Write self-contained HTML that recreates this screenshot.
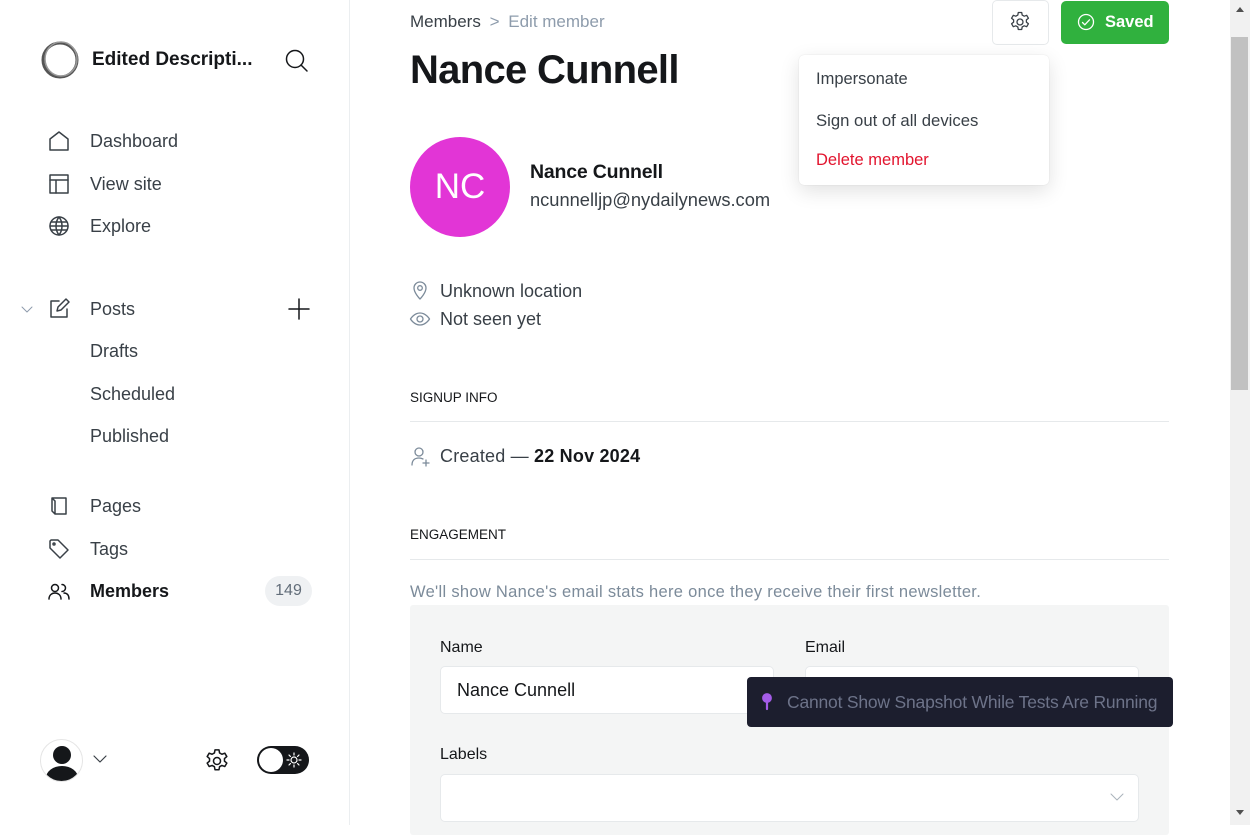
<!DOCTYPE html>
<html><head><meta charset="utf-8"><style>
*{box-sizing:border-box;margin:0;padding:0}
body{width:1250px;height:825px;overflow:hidden;background:#fff;font-family:"Liberation Sans",sans-serif;color:#15171a;position:relative}
.a{position:absolute;white-space:nowrap}
.side{position:absolute;left:0;top:0;width:350px;height:825px;border-right:1px solid #ebeef0}
.nav{font-size:18px;color:#394047}
svg{position:absolute;fill:none;stroke-linecap:round;stroke-linejoin:round}
.sb{position:absolute;left:1230px;top:0;width:20px;height:825px;background:#f1f1f1}
</style></head><body>
<div class="side">
<svg style="left:40px;top:41px" width="40" height="38" viewBox="0 0 40 38"><ellipse cx="20" cy="19" rx="17" ry="17" stroke="#555" stroke-width="3"/><ellipse cx="21" cy="18" rx="16" ry="17" stroke="#999" stroke-width="1.5"/></svg>
<div class="a" style="left:92px;top:49px;font-size:19px;font-weight:700">Edited Descripti...</div>
<svg style="left:284px;top:48px" width="26" height="26" viewBox="0 0 26 26" stroke="#15171a" stroke-width="1.5"><circle cx="11" cy="11" r="8.5"/><path d="M17 17l6 6"/></svg>

<svg style="left:48px;top:130px" width="22" height="22" viewBox="0 0 22 22" stroke="#394047" stroke-width="1.5"><path d="M2 9L11 2l9 7v11H2z"/></svg>
<div class="a nav" style="left:90px;top:131px">Dashboard</div>
<svg style="left:48px;top:173px" width="22" height="22" viewBox="0 0 22 22" stroke="#394047" stroke-width="1.5"><rect x="2" y="2" width="18" height="18"/><path d="M2 7h18M8 7v13"/></svg>
<div class="a nav" style="left:90px;top:174px">View site</div>
<svg style="left:48px;top:215px" width="22" height="22" viewBox="0 0 22 22" stroke="#394047" stroke-width="1.5"><circle cx="11" cy="11" r="9"/><path d="M2 11h18M3 7h16M3 15h16M11 2c-4 5-4 13 0 18M11 2c4 5 4 13 0 18"/></svg>
<div class="a nav" style="left:90px;top:216px">Explore</div>

<svg style="left:20px;top:302px" width="14" height="14" viewBox="0 0 14 14" stroke="#8e9cac" stroke-width="1"><path d="M2 5l5 5 5-5"/></svg>
<svg style="left:48px;top:297px" width="22" height="22" viewBox="0 0 22 22" stroke="#394047" stroke-width="1.5"><path d="M11 4H3v16h16v-8M9 14l1-4 8-8 3 3-8 8z"/></svg>
<div class="a nav" style="left:90px;top:299px">Posts</div>
<svg style="left:287px;top:297px" width="24" height="24" viewBox="0 0 24 24" stroke="#15171a" stroke-width="1.5"><path d="M12 2v20M2 12h20"/></svg>
<div class="a nav" style="left:90px;top:341px">Drafts</div>
<div class="a nav" style="left:90px;top:384px">Scheduled</div>
<div class="a nav" style="left:90px;top:426px">Published</div>

<svg style="left:48px;top:495px" width="22" height="22" viewBox="0 0 22 22" stroke="#394047" stroke-width="1.5"><path d="M4 3h14v16H7L4 16z M4 3l3 3v13"/></svg>
<div class="a nav" style="left:90px;top:496px">Pages</div>
<svg style="left:48px;top:538px" width="22" height="22" viewBox="0 0 22 22" stroke="#394047" stroke-width="1.5"><path d="M2 3v7l10 10 8-8L10 2H3z"/><circle cx="6" cy="6" r="1"/></svg>
<div class="a nav" style="left:90px;top:539px">Tags</div>
<svg style="left:48px;top:581px" width="22" height="22" viewBox="0 0 22 22" stroke="#15171a" stroke-width="1.5"><circle cx="7" cy="7" r="3.5"/><path d="M1 18c0-4 3-6 6-6s6 2 6 6M14 3.5a3.5 3.5 0 010 7M16 12c3 0 5 2 5 6"/></svg>
<div class="a" style="left:90px;top:581px;font-size:18px;font-weight:700">Members</div>
<div class="a" style="left:265px;top:576px;width:47px;height:30px;border-radius:15px;background:#eff1f3;color:#626d79;font-size:16px;text-align:center;line-height:30px">149</div>

<div class="a" style="left:40px;top:739px;width:43px;height:43px;border-radius:50%;border:1px solid #e5e5e5;overflow:hidden">
<div style="position:absolute;left:12px;top:6px;width:18px;height:18px;border-radius:50%;background:#15171a"></div>
<div style="position:absolute;left:5px;top:26px;width:32px;height:24px;border-radius:50%;background:#15171a"></div></div>
<svg style="left:92px;top:753px" width="16" height="12" viewBox="0 0 16 12" stroke="#394047" stroke-width="1.2"><path d="M2 3l6 6 6-6"/></svg>
<svg style="left:203px;top:747px" width="28" height="28" viewBox="0 0 24 24" stroke="#15171a" stroke-width="1.3"><circle cx="12" cy="12" r="3"/><path d="M10.3 2.5h3.4l.5 2.6 2 1.1 2.5-.9 1.7 2.9-2 1.7v2.2l2 1.7-1.7 2.9-2.5-.9-2 1.1-.5 2.6h-3.4l-.5-2.6-2-1.1-2.5.9-1.7-2.9 2-1.7V9.9l-2-1.7 1.7-2.9 2.5.9 2-1.1z"/></svg>
<div class="a" style="left:257px;top:746px;width:52px;height:28px;border-radius:14px;background:#15171a"></div>
<div class="a" style="left:259px;top:748px;width:24px;height:24px;border-radius:50%;background:#fff"></div>
<svg style="left:286px;top:752px" width="16" height="16" viewBox="0 0 16 16" stroke="#fff" stroke-width="1.2"><circle cx="8" cy="8" r="3"/><path d="M8 1v2M8 13v2M1 8h2M13 8h2M3 3l1.4 1.4M11.6 11.6L13 13M3 13l1.4-1.4M11.6 4.4L13 3"/></svg>
</div>

<div class="a" style="left:410px;top:12px;font-size:17px;color:#394047">Members <span style="color:#8e9cac;margin:0 4px">&gt;</span> <span style="color:#8e9cac">Edit member</span></div>
<div class="a" style="left:410px;top:48px;font-size:40px;font-weight:700;letter-spacing:-0.7px">Nance Cunnell</div>

<div class="a" style="left:992px;top:0;width:57px;height:45px;border:1px solid #e6e9eb;border-radius:5px"></div>
<svg style="left:1008px;top:10px" width="24" height="24" viewBox="0 0 24 24" stroke="#394047" stroke-width="1.3"><circle cx="12" cy="12" r="3"/><path d="M10.3 2.5h3.4l.5 2.6 2 1.1 2.5-.9 1.7 2.9-2 1.7v2.2l2 1.7-1.7 2.9-2.5-.9-2 1.1-.5 2.6h-3.4l-.5-2.6-2-1.1-2.5.9-1.7-2.9 2-1.7V9.9l-2-1.7 1.7-2.9 2.5.9 2-1.1z"/></svg>
<div class="a" style="left:1061px;top:1px;width:108px;height:43px;border-radius:5px;background:#30b13e;color:#fff;font-weight:700;font-size:16.5px;line-height:43px;padding-left:44px">Saved</div>
<svg style="left:1077px;top:13px" width="18" height="18" viewBox="0 0 18 18" stroke="#fff" stroke-width="1.3"><circle cx="9" cy="9" r="7.5"/><path d="M5.5 9.5l2.3 2.3 4.7-5"/></svg>

<div class="a" style="left:410px;top:137px;width:100px;height:100px;border-radius:50%;background:#e235d6;color:#fff;font-size:35px;text-align:center;line-height:100px">NC</div>
<div class="a" style="left:530px;top:161px;font-size:19.5px;font-weight:700;letter-spacing:-.2px">Nance Cunnell</div>
<div class="a" style="left:530px;top:189px;font-size:18.3px;color:#394047">ncunnelljp@nydailynews.com</div>

<div class="a" style="left:799px;top:55px;width:250px;height:130px;background:#fff;border-radius:5px;box-shadow:0 0 1px rgba(0,0,0,.15),0 6px 20px rgba(0,0,0,.12)"></div>
<div class="a" style="left:816px;top:70px;font-size:16.5px;color:#394047">Impersonate</div>
<div class="a" style="left:816px;top:111px;font-size:16.7px;color:#394047">Sign out of all devices</div>
<div class="a" style="left:816px;top:151px;font-size:16.5px;color:#e2142e">Delete member</div>

<svg style="left:410px;top:280px" width="20" height="20" viewBox="0 0 20 20" stroke="#7c8b9a" stroke-width="1.3"><path d="M10 19s6-6 6-11a6 6 0 00-12 0c0 5 6 11 6 11z"/><circle cx="10" cy="8" r="2.3"/></svg>
<div class="a" style="left:440px;top:281px;font-size:18px;color:#394047">Unknown location</div>
<svg style="left:409px;top:310px" width="22" height="18" viewBox="0 0 22 18" stroke="#7c8b9a" stroke-width="1.3"><path d="M1.5 9S5 3 11 3s9.5 6 9.5 6-3.5 6-9.5 6S1.5 9 1.5 9z"/><circle cx="11" cy="9" r="3"/></svg>
<div class="a" style="left:440px;top:309px;font-size:18px;color:#394047">Not seen yet</div>

<div class="a" style="left:410px;top:390px;font-size:13.5px">SIGNUP INFO</div>
<div class="a" style="left:410px;top:421px;width:759px;height:1px;background:#e6e9eb"></div>
<svg style="left:410px;top:445px" width="22" height="22" viewBox="0 0 22 22" stroke="#7c8b9a" stroke-width="1.3"><circle cx="9" cy="7" r="4"/><path d="M2 20c0-5 3-7 7-7 2 0 3 .5 4 1M16 15v6M13 18h6"/></svg>
<div class="a" style="left:440px;top:446px;font-size:18px;color:#394047;letter-spacing:.2px">Created — <b style="color:#15171a">22 Nov 2024</b></div>

<div class="a" style="left:410px;top:527px;font-size:13.5px">ENGAGEMENT</div>
<div class="a" style="left:410px;top:559px;width:759px;height:1px;background:#e6e9eb"></div>
<div class="a" style="left:410px;top:583px;font-size:16.5px;color:#7c8b9a;letter-spacing:.3px">We'll show Nance's email stats here once they receive their first newsletter.</div>

<div class="a" style="left:410px;top:605px;width:759px;height:230px;background:#f4f5f5;border-radius:3px"></div>
<div class="a" style="left:440px;top:639px;font-size:16px;font-weight:500">Name</div>
<div class="a" style="left:805px;top:639px;font-size:16px;font-weight:500">Email</div>
<div class="a" style="left:440px;top:666px;width:334px;height:48px;background:#fff;border:1px solid #e6e9eb;border-radius:5px;font-size:18px;line-height:46px;padding-left:16px;color:#15171a">Nance Cunnell</div>
<div class="a" style="left:805px;top:666px;width:334px;height:48px;background:#fff;border:1px solid #e6e9eb;border-radius:5px"></div>
<div class="a" style="left:440px;top:746px;font-size:16px;font-weight:500">Labels</div>
<div class="a" style="left:440px;top:774px;width:699px;height:48px;background:#fff;border:1px solid #e6e9eb;border-radius:5px"></div>
<svg style="left:1109px;top:790px" width="16" height="14" viewBox="0 0 16 14" stroke="#aab3bb" stroke-width="1"><path d="M2 4l6 6 6-6"/></svg>

<div class="a" style="left:747px;top:677px;width:426px;height:50px;background:#1c1e2e;border-radius:4px"></div>
<svg style="left:760px;top:692px" width="14" height="20" viewBox="0 0 14 20" stroke="#a45ce8" stroke-width="2.2"><circle cx="7" cy="6" r="3.8" fill="#a45ce8"/><path d="M7 9v8"/></svg>
<div class="a" style="left:787px;top:692px;font-size:17.5px;color:#6d7389;letter-spacing:-.2px">Cannot Show Snapshot While Tests Are Running</div>

<div class="sb"><div style="position:absolute;left:1px;top:37px;width:17px;height:353px;background:#c1c1c1"></div>
<div style="position:absolute;left:6px;top:7px;border:4px solid transparent;border-bottom:5px solid #505050;border-top:0"></div>
<div style="position:absolute;left:6px;top:810px;border:4px solid transparent;border-top:5px solid #505050;border-bottom:0"></div></div>
</body></html>
